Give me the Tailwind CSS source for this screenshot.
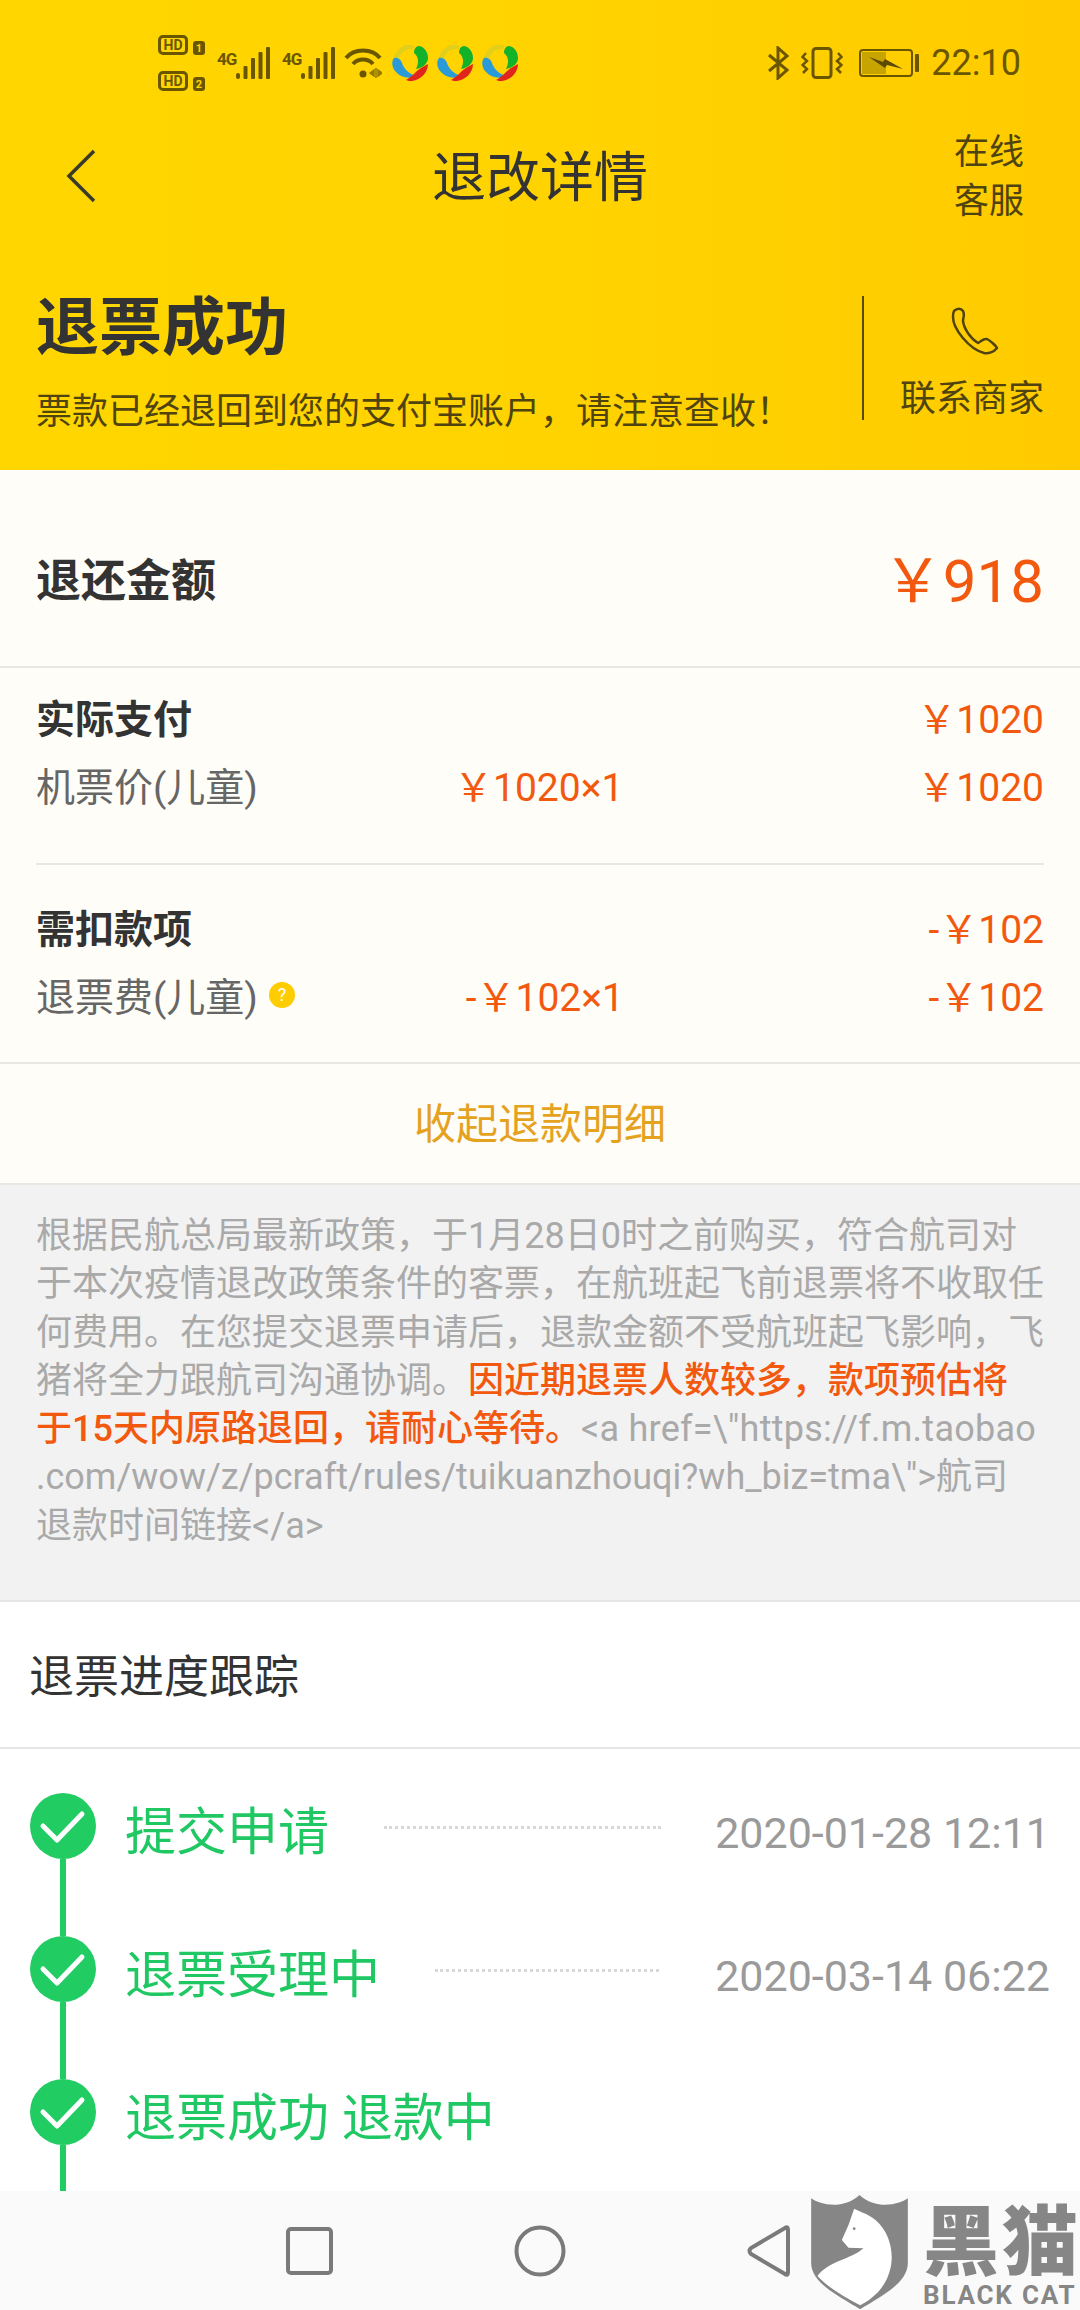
<!DOCTYPE html>
<html lang="zh-CN">
<head>
    <meta charset="UTF-8">
    <meta name="viewport" content="width=device-width, initial-scale=1.0">
    <title>退改详情</title>
    <script src="https://cdn.jsdelivr.net/npm/@tailwindcss/browser@4"></script>
</head>
<body class="font-['Roboto','Noto_Sans_CJK_SC',sans-serif] bg-white">
<div class="relative w-[1080px] h-[2310px] overflow-hidden flex flex-col">

    <!-- shared logo of the status bar app -->
    <svg class="hidden">
        <symbol id="appLogo" viewBox="0 0 36 36">
            <path d="M4 13 C7 5 14 1 22 1" fill="none" stroke="#e2cf1c" stroke-width="5"/>
            <path d="M27 1 C33 2 36 8 36 13 C36 19 30 23 24 24 C27 18 27 12 22 8 C22 4 24 1 27 1Z" fill="#12b22a"/>
            <path d="M2 13 C6 12 9 15 10 18 C12 24 17 29 24 31 C18 34 9 33 4 27 C0 23 -1 17 2 13Z" fill="#2a9bd8"/>
            <path d="M36 19 C36 27 29 35 20 36 C18 36 16 36 14 35 C21 31 24 26 29 23 C32 21 34 20 36 19Z" fill="#e0261c"/>
        </symbol>
    </svg>

    <!-- Yellow header -->
    <div class="h-[470px] shrink-0 bg-linear-to-r from-[#ffd600] via-[#ffd300] to-[#ffcb00]">
        <!-- Status bar -->
        <div class="h-[126px] flex items-center justify-between pl-[158px] pr-[59px] text-[#6b5600]">
            <div class="flex items-center">
                <div class="w-[47px] flex flex-col gap-[16px]">
                    <div class="flex items-end gap-[5px]">
                        <span class="w-[30px] h-[20px] border-[3px] border-[#6b5600] rounded-[5px] flex items-center justify-center text-[14px] leading-none font-bold">HD</span>
                        <span class="w-[12px] h-[14px] bg-[#6b5600] rounded-[3px] flex items-center justify-center text-[11px] leading-none font-bold text-[#ffd400]">1</span>
                    </div>
                    <div class="flex items-end gap-[5px]">
                        <span class="w-[30px] h-[20px] border-[3px] border-[#6b5600] rounded-[5px] flex items-center justify-center text-[14px] leading-none font-bold">HD</span>
                        <span class="w-[12px] h-[14px] bg-[#6b5600] rounded-[3px] flex items-center justify-center text-[11px] leading-none font-bold text-[#ffd400]">2</span>
                    </div>
                </div>
                <div class="ml-[12px] w-[19px] h-[32px] text-[17px] leading-[24px] font-bold tracking-[-1px]">4G</div>
                <svg width="34" height="32" viewBox="0 0 34 32" fill="#6b5600"><rect x="0" y="26" width="4" height="6" rx="2"/><rect x="7.5" y="19" width="4" height="13" rx="1"/><rect x="15" y="11" width="4" height="21" rx="1"/><rect x="22.5" y="5" width="4" height="27" rx="1"/><rect x="30" y="0" width="4" height="32" rx="1"/></svg>
                <div class="ml-[12px] w-[19px] h-[32px] text-[17px] leading-[24px] font-bold tracking-[-1px]">4G</div>
                <svg width="34" height="32" viewBox="0 0 34 32" fill="#6b5600"><rect x="0" y="26" width="4" height="6" rx="2"/><rect x="7.5" y="19" width="4" height="13" rx="1"/><rect x="15" y="11" width="4" height="21" rx="1"/><rect x="22.5" y="5" width="4" height="27" rx="1"/><rect x="30" y="0" width="4" height="32" rx="1"/></svg>
                <svg class="ml-[9px]" width="38" height="32" viewBox="0 0 38 32" fill="none" stroke="#6b5600" stroke-width="4">
                    <path d="M2 11 C10 1 28 1 36 11"/>
                    <path d="M9 17 C14 11 24 11 29 17"/>
                    <circle cx="19" cy="27" r="3.5" fill="#6b5600" stroke="none"/>
                    <path d="M32 21 L32 31 M26 26 L30 23 L30 29Z M34 23 L38 26 L34 29Z" stroke-width="1.5" fill="#6b5600" opacity="0.7"/>
                </svg>
                <div class="ml-[10px] flex gap-[9px]">
                    <svg width="36" height="36"><use href="#appLogo"/></svg>
                    <svg width="36" height="36"><use href="#appLogo"/></svg>
                    <svg width="36" height="36"><use href="#appLogo"/></svg>
                </div>
            </div>
            <div class="flex items-center">
                <svg width="21" height="34" viewBox="0 0 21 34" fill="none" stroke="#6b5600" stroke-width="3"><path d="M1 9 L19 24 L10 32 L10 2 L19 10 L1 25"/></svg>
                <svg class="ml-[12px]" width="42" height="32" viewBox="0 0 42 32" fill="none" stroke="#6b5600"><rect x="12" y="1.5" width="18" height="29" rx="3" stroke-width="3"/><path d="M5 6 L1.5 10 L6 14 L1.5 18 L6 22 L2 26" stroke-width="2.5"/><path d="M37 6 L40.5 10 L36 14 L40.5 18 L36 22 L40 26" stroke-width="2.5"/></svg>
                <svg class="ml-[16px]" width="60" height="28" viewBox="0 0 60 28"><rect x="1" y="1" width="52" height="26" rx="3" fill="none" stroke="#6b5600" stroke-width="2"/><rect x="3" y="3" width="24" height="22" fill="#c7a400"/><rect x="56" y="5" width="4" height="18" rx="1" fill="#6b5600"/><path d="M10 8 L24 13 L26 10 L44 20 L28 16 L26 19Z" fill="#5c4a00"/></svg>
                <span class="ml-[12px] text-[36px] leading-none">22:10</span>
            </div>
        </div>
        <!-- Title row -->
        <div class="h-[100px] grid grid-cols-[1fr_auto_1fr] items-center">
            <div class="pl-[66px]">
                <svg width="30" height="54" viewBox="0 0 30 54" fill="none" stroke="#3a3a2a" stroke-width="3.5"><path d="M28 2 L3 27 L28 52"/></svg>
            </div>
            <div class="pt-[5px] text-[54px] leading-none text-[#333]">退改详情</div>
            <div class="flex justify-end pr-[56px] pt-[1px] text-[35px] leading-[49px] text-[#4f4410]">
                <div class="w-[70px]">在线<br>客服</div>
            </div>
        </div>
        <!-- Refund status -->
        <div class="mt-[70px] h-[124px] flex">
            <div class="w-[862px] pl-[36px]">
                <div class="text-[63px] leading-[63px] font-bold text-[#333]">退票成功</div>
                <div class="mt-[35px] text-[36px] leading-[36px] text-[#4f4410]">票款已经退回到您的支付宝账户，请注意查收！</div>
            </div>
            <div class="w-[2px] bg-[#5a4a00]"></div>
            <div class="flex-1 flex flex-col items-center">
                <svg class="mt-[11px] ml-[5px]" width="48" height="48" viewBox="0 0 48 48" fill="none" stroke="#4f4410" stroke-width="2.5" stroke-linejoin="round"><path d="M3 4 C6 1 10 1 12 4 C14 8 12 11 12 14 C13 22 20 32 27 36 C30 35 32 31 36 32 C40 34 45 39 46 41 C43 45 37 47 33 46 C18 42 2 22 2 10 C2 8 2 6 3 4Z"/></svg>
                <div class="mt-[27px] text-[36px] leading-[35px] text-[#4f4410]">联系商家</div>
            </div>
        </div>
    </div>

    <div class="flex-1 min-h-0 overflow-hidden">
        <!-- Refund amount -->
        <div class="bg-[#fffdf8]">
            <div class="h-[198px] pt-[28px] pl-[36px] pr-[36px] flex items-center justify-between border-b-2 border-[#e9e7e2]">
                <span class="text-[45px] font-bold text-[#333]">退还金额</span>
                <span class="text-[60px] text-[#f2590f]">￥918</span>
            </div>
            <div class="px-[36px] pt-[17px]">
                <div class="h-[68px] pt-[2px] flex items-center justify-between text-[39px]">
                    <span class="font-bold text-[#333]">实际支付</span>
                    <span class="text-[#f2590f]">￥1020</span>
                </div>
                <div class="h-[68px] pt-[2px] grid grid-cols-[1fr_172px_1fr] items-center text-[39px] text-[#f2590f] whitespace-nowrap">
                    <span class="text-[#666]">机票价(儿童)</span>
                    <span class="text-right pr-[3px]">￥1020×1</span>
                    <span class="text-right">￥1020</span>
                </div>
                <div class="mt-[42px] h-[2px] bg-[#e9e7e2]"></div>
                <div class="mt-[30px] h-[68px] pt-[2px] flex items-center justify-between text-[39px]">
                    <span class="font-bold text-[#333]">需扣款项</span>
                    <span class="text-[#f2590f]">-￥102</span>
                </div>
                <div class="h-[68px] pt-[2px] grid grid-cols-[1fr_172px_1fr] items-center text-[39px] text-[#f2590f] whitespace-nowrap">
                    <span class="flex items-center text-[#666]">退票费(儿童)<span class="ml-[11px] mb-[6px] w-[26px] h-[26px] rounded-full bg-[#ffcc00] text-white text-[18px] leading-none flex items-center justify-center">?</span></span>
                    <span class="text-right pr-[2px]">-￥102×1</span>
                    <span class="text-right">-￥102</span>
                </div>
            </div>
            <div class="mt-[31px] h-[123px] pt-[2px] border-y-2 border-[#e9e7e2] flex items-center justify-center text-[42px] text-[#e5a21f]">收起退款明细</div>
        </div>

        <!-- Policy note -->
        <div class="h-[415px] bg-[#f2f2f2] pl-[36px] pt-[27px] text-[36px] leading-[48.3px] text-[#a9a9a9] whitespace-nowrap">
            根据民航总局最新政策，于1月28日0时之前购买，符合航司对<br>
            于本次疫情退改政策条件的客票，在航班起飞前退票将不收取任<br>
            何费用。在您提交退票申请后，退款金额不受航班起飞影响，飞<br>
            猪将全力跟航司沟通协调。<span class="font-medium text-[#f2590f]">因近期退票人数较多，款项预估将<br>
            于15天内原路退回，请耐心等待。</span><span class="tracking-[0.25px]">&lt;a href=\"https://f.m.taobao</span><br>
            .com/wow/z/pcraft/rules/tuikuanzhouqi?wh_biz=tma\"&gt;航司<br>
            退款时间链接&lt;/a&gt;
        </div>

        <!-- Progress -->
        <div class="bg-white border-t-2 border-[#e6e6e6]">
            <div class="h-[147px] pt-[7px] pl-[29px] flex items-center border-b-2 border-[#e6e6e6] text-[45px] text-[#333]">退票进度跟踪</div>
            <div class="pt-[44px] pl-[30px] pr-[30px]">
                <div class="h-[143px] flex">
                    <div class="w-[66px] flex flex-col items-center">
                        <svg class="shrink-0" width="66" height="66" viewBox="0 0 66 66"><circle cx="33" cy="33" r="33" fill="#21cc63"/><path d="M13 33 L27 47 L52 21" fill="none" stroke="#fff" stroke-width="5" stroke-linecap="round" stroke-linejoin="round"/></svg>
                        <div class="flex-1 w-[6px] bg-[#21cc63]"></div>
                    </div>
                    <span class="ml-[29px] h-[66px] text-[51px] leading-[80px] text-[#1fc862] whitespace-nowrap">提交申请</span>
                    <div class="ml-[55px] mt-[33px] w-[277px] h-0 border-t-[3px] border-dotted border-[#d8d8d8]"></div>
                    <span class="ml-auto h-[66px] text-[43px] leading-[80px] text-[#9a9a9a] whitespace-nowrap">2020-01-28 12:11</span>
                </div>
                <div class="h-[143px] flex">
                    <div class="w-[66px] flex flex-col items-center">
                        <svg class="shrink-0" width="66" height="66" viewBox="0 0 66 66"><circle cx="33" cy="33" r="33" fill="#21cc63"/><path d="M13 33 L27 47 L52 21" fill="none" stroke="#fff" stroke-width="5" stroke-linecap="round" stroke-linejoin="round"/></svg>
                        <div class="flex-1 w-[6px] bg-[#21cc63]"></div>
                    </div>
                    <span class="ml-[29px] h-[66px] text-[51px] leading-[80px] text-[#1fc862] whitespace-nowrap">退票受理中</span>
                    <div class="ml-[55px] mt-[33px] w-[224px] h-0 border-t-[3px] border-dotted border-[#d8d8d8]"></div>
                    <span class="ml-auto h-[66px] text-[43px] leading-[80px] text-[#9a9a9a] whitespace-nowrap">2020-03-14 06:22</span>
                </div>
                <div class="h-[143px] flex">
                    <div class="w-[66px] flex flex-col items-center">
                        <svg class="shrink-0" width="66" height="66" viewBox="0 0 66 66"><circle cx="33" cy="33" r="33" fill="#21cc63"/><path d="M13 33 L27 47 L52 21" fill="none" stroke="#fff" stroke-width="5" stroke-linecap="round" stroke-linejoin="round"/></svg>
                        <div class="flex-1 w-[6px] bg-[#21cc63]"></div>
                    </div>
                    <span class="ml-[29px] h-[66px] text-[51px] leading-[80px] text-[#1fc862] whitespace-nowrap">退票成功 退款中</span>
                </div>
            </div>
        </div>
    </div>

    <!-- Android nav bar -->
    <div class="h-[119px] shrink-0 bg-[#fafafa]">
        <svg width="1080" height="119" viewBox="0 0 1080 119" fill="none" stroke="#7a7a7a" stroke-width="4">
            <rect x="288" y="38" width="43" height="44" rx="3"/>
            <circle cx="540" cy="60" r="23.5"/>
            <path d="M788 39 L788 81 Q788 85 785 83 L751 63 Q748 60 751 57 L785 37 Q788 35 788 39Z"/>
        </svg>
    </div>

    <!-- Watermark -->
    <div class="absolute left-[811px] top-[2195px] flex text-[#868686]">
        <svg width="97" height="115" viewBox="93 45 290 345">
            <path d="M93 55 C120 75 190 90 238 45 C286 90 356 75 383 55 L383 250 C383 310 300 350 240 388 C180 350 93 310 93 250Z" fill="#868686"/>
            <path d="M222 86 L248 98 C310 120 345 190 332 260 C320 320 280 355 240 376 C190 350 140 320 112 288 C150 240 210 240 250 205 L205 203 L185 180 L205 135Z" fill="#fff"/>
            <circle cx="222" cy="146" r="4" fill="#868686"/>
        </svg>
        <div class="ml-[15px] w-[155px]">
            <div class="text-[76px] leading-[76px] font-black mt-[10px] tracking-[3px] whitespace-nowrap">黑猫</div>
            <div class="text-[26px] leading-[24px] font-bold mt-[2px] tracking-[1.8px] whitespace-nowrap">BLACK CAT</div>
        </div>
    </div>
</div>
</body>
</html>
